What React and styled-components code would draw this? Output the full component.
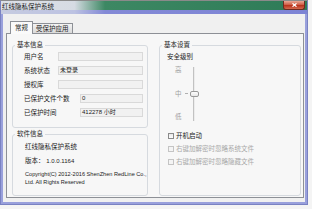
import React from "react";
import styled, { createGlobalStyle } from "styled-components";

const GlobalStyle = createGlobalStyle`
  html, body { margin: 0; padding: 0; background: #f4f4f4; }
  body {
    font-family: "Liberation Sans", "Noto Sans CJK SC", sans-serif;
    font-size: 6.5px;
    color: #1c1c1c;
  }
`;

const Window = styled.div`
  width: 308px;
  height: 205px;
  box-sizing: border-box;
  border: 1px solid #7a82c2;
  border-top-color: #8a8a8a;
  background: #99a0dc;
  display: flex;
  flex-direction: column;
`;

const TitleBar = styled.div`
  height: 13px;
  flex: none;
  display: flex;
  align-items: flex-start;
  background:
    linear-gradient(to right, #dde1e8 0%, #d6dbe3 24%, #3d8863 34%, #2e7b57 100%) top / 100% 9px no-repeat,
    linear-gradient(to right, #c6cbe0 0%, #bcc2e2 24%, #8389d6 34%, #7d84d5 100%) bottom / 100% 4px no-repeat;
`;

const TitleText = styled.div`
  padding: 2px 0 0 1px;
  line-height: 8px;
  color: #1a1a1a;
`;

const CloseButton = styled.div`
  margin-left: auto;
  margin-right: 2px;
  width: 22px;
  height: 9px;
  box-sizing: border-box;
  border: 1px solid #6e2a20;
  border-top: none;
  border-radius: 0 0 3px 3px;
  background: linear-gradient(#e9a796, #d0604a 45%, #b9331d 55%, #d3694f);
  display: flex;
  align-items: center;
  justify-content: center;
`;

const Body = styled.div`
  flex: 1;
  margin: 0 2px 2px;
  background: #f0f0f0;
  padding: 7px 1px 4px 3px;
  display: flex;
  flex-direction: column;
  min-height: 0;
`;

const TabStrip = styled.div`
  display: flex;
  align-items: flex-end;
  height: 12px;
  padding-left: 4px;
  flex: none;
`;

const Tab = styled.div`
  box-sizing: border-box;
  line-height: 8px;
  border: 1px solid #8d9096;
  border-bottom: none;
  position: relative;
  ${(p) =>
    p.$active
      ? `
    height: 13px;
    margin-bottom: -1px;
    padding: 2px 4px 0;
    background: #fafafa;
    z-index: 1;
  `
      : `
    height: 10px;
    margin-left: -1px;
    padding: 1px 3px 0;
    background: linear-gradient(#f3f3f3, #e6e6e6 50%, #dadada);
  `}
`;

const Panel = styled.div`
  flex: 1;
  border: 1px solid #8d9096;
  background: #f7f7f7;
  padding: 7px 2px 1px 5px;
  display: flex;
  gap: 11px;
  min-height: 0;
`;

const Column = styled.div`
  width: ${(p) => p.$width}px;
  display: flex;
  flex-direction: column;
  gap: ${(p) => p.$gap || 0}px;
`;

const Group = styled.fieldset`
  margin: 0;
  padding: 0;
  border: 1px solid #d6dadf;
  border-radius: 3px;
  min-width: 0;
  flex: ${(p) => (p.$grow ? 1 : "none")};
  display: flex;
  flex-direction: column;
`;

const Legend = styled.legend`
  margin-left: 2px;
  padding: 0 2px;
  line-height: 8px;
  color: #222;
`;

const GroupBody = styled.div`
  padding: ${(p) => p.$pad};
  display: flex;
  flex-direction: column;
`;

const Rows = styled.div`
  display: flex;
  flex-direction: column;
  gap: 5px;
`;

const Row = styled.div`
  display: flex;
  align-items: center;
  height: 9px;
`;

const Label = styled.div`
  width: ${(p) => p.$width}px;
  flex: none;
  line-height: 8px;
`;

const Field = styled.div`
  flex: 1;
  height: 9px;
  box-sizing: border-box;
  border: 1px solid #d9d9d9;
  background: #f1f1f1;
  padding-left: 1px;
  line-height: 7px;
  font-size: 6px;
  white-space: nowrap;
`;

const Line = styled.div`
  line-height: 8px;
  margin-top: ${(p) => p.$top || 0}px;
  font-size: ${(p) => p.$size || 6.5}px;
  white-space: nowrap;
`;

const Small = styled.span`
  font-size: 6px;
`;

const Slider = styled.div`
  display: flex;
  height: 55px;
  margin: 5px 0 0 8px;
`;

const Marks = styled.div`
  display: flex;
  flex-direction: column;
  justify-content: space-between;
  line-height: 8px;
  color: #a0a0a0;
`;

const TickColumn = styled.div`
  display: flex;
  align-items: center;
  margin-left: 3px;
`;

const Tick = styled.div`
  width: 3px;
  height: 1px;
  background: #b0b0b0;
`;

const TrackArea = styled.div`
  position: relative;
  width: 10px;
  margin-left: 1px;
  margin-top: 1px;
  background: linear-gradient(
    to right,
    transparent 4px,
    #c2c2c2 4px,
    #c2c2c2 5px,
    #ececec 5px,
    #ececec 6px,
    transparent 6px
  );
`;

const Thumb = styled.div`
  position: absolute;
  left: 1px;
  top: 24px;
  width: 9px;
  height: 6px;
  box-sizing: border-box;
  border: 1px solid #999;
  border-radius: 2px;
  background: linear-gradient(#fdfdfd, #e8e8e8);
`;

const Checks = styled.div`
  display: flex;
  flex-direction: column;
  gap: 5px;
  margin: 11px 0 0 1px;
`;

const CheckRow = styled.div`
  display: flex;
  align-items: center;
  gap: 2px;
  line-height: 8px;
  color: ${(p) => (p.$disabled ? "#a8a8a8" : "#1c1c1c")};
`;

const Box = styled.div`
  width: 6px;
  height: 6px;
  box-sizing: border-box;
  border: 1px solid ${(p) => (p.$disabled ? "#c4c4c4" : "#8a8a8a")};
  background: ${(p) => (p.$disabled ? "#f4f4f4" : "linear-gradient(#e9e9e9, #fdfdfd)")};
`;

const infoRows = [
  { label: "用户名", width: 34, value: "" },
  { label: "系统状态", width: 34, value: "未登录" },
  { label: "授权库", width: 34, value: "" },
  { label: "已保护文件个数", width: 56, value: "0" },
  { label: "已保护时间", width: 56, value: "412278 小时" },
];

const checks = [
  { text: "开机启动", disabled: false },
  { text: "右键加解密时忽略系统文件", disabled: true },
  { text: "右键加解密时忽略隐藏文件", disabled: true },
];

export default function App() {
  return (
    <>
      <GlobalStyle />
      <Window>
        <TitleBar>
          <TitleText>红线隐私保护系统</TitleText>
          <CloseButton>
            <svg width="5" height="4" viewBox="0 0 5 4">
              <path d="M0.5 0.3 L4.5 3.7 M4.5 0.3 L0.5 3.7" stroke="#fff" strokeWidth="1.2" />
            </svg>
          </CloseButton>
        </TitleBar>
        <Body>
          <TabStrip>
            <Tab $active>常规</Tab>
            <Tab>受保护应用</Tab>
          </TabStrip>
          <Panel>
            <Column $width={136} $gap={2}>
              <Group>
                <Legend>基本信息</Legend>
                <GroupBody $pad="3px 4px 10px 11px">
                  <Rows>
                    {infoRows.map((r) => (
                      <Row key={r.label}>
                        <Label $width={r.width}>{r.label}</Label>
                        <Field>{r.value}</Field>
                      </Row>
                    ))}
                  </Rows>
                </GroupBody>
              </Group>
              <Group $grow>
                <Legend>软件信息</Legend>
                <GroupBody $pad="5px 4px 0 12px">
                  <Line>红线隐私保护系统</Line>
                  <Line $top={6}>
                    版本： <Small>1.0.0.1164</Small>
                  </Line>
                  <Line $top={5} $size={5.6}>
                    Copyright(C) 2012-2016 ShenZhen RedLine Co.,
                    <br />
                    Ltd. All Rights Reserved
                  </Line>
                </GroupBody>
              </Group>
            </Column>
            <Column $width={142}>
              <Group $grow>
                <Legend>基本设置</Legend>
                <GroupBody $pad="4px 4px 0 7px">
                  <Line>安全级别</Line>
                  <Slider>
                    <Marks>
                      <span>高</span>
                      <span>中</span>
                      <span>低</span>
                    </Marks>
                    <TickColumn>
                      <Tick />
                    </TickColumn>
                    <TrackArea>
                      <Thumb />
                    </TrackArea>
                  </Slider>
                  <Checks>
                    {checks.map((c) => (
                      <CheckRow key={c.text} $disabled={c.disabled}>
                        <Box $disabled={c.disabled} />
                        {c.text}
                      </CheckRow>
                    ))}
                  </Checks>
                </GroupBody>
              </Group>
            </Column>
          </Panel>
        </Body>
      </Window>
    </>
  );
}
